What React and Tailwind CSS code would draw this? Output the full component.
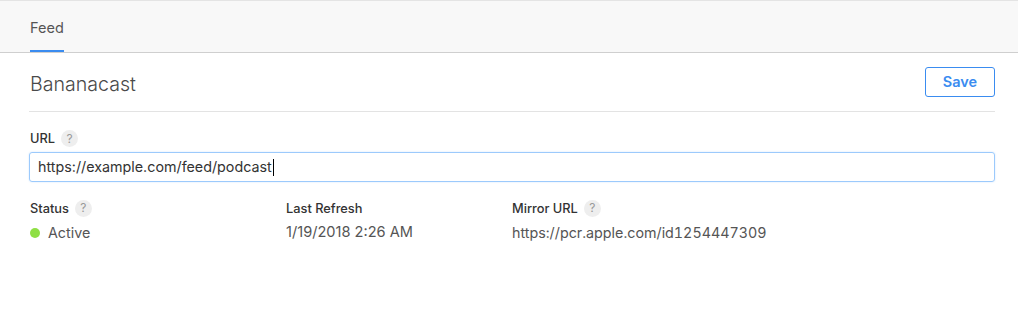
import React from "react";

function Help() {
  return (
    <span className="ml-[6px] inline-flex h-[17px] w-[17px] items-center justify-center rounded-full bg-[#eeeeee] text-[12px] font-normal leading-none text-[#999]">
      ?
    </span>
  );
}

export default function App() {
  return (
    <div className="h-[311px] w-[1018px] bg-white text-[#333] [font-family:Inter,'Liberation_Sans',sans-serif]">
      <div className="h-[53px] border-y border-t-[#e4e4e4] border-b-[#cfcfcf] bg-[#f8f8f8] px-[30px]">
        <div className="flex h-full items-end">
          <div className="flex h-full flex-col justify-end">
            <span className="pb-[15px] text-[14.5px] leading-none text-[#555]">Feed</span>
            <div className="h-[2px] w-[34px] bg-[#3a8cf0]" />
          </div>
        </div>
      </div>
      <div className="pl-[29px] pr-[23px]">
        <div className="flex h-[59px] items-center justify-between border-b border-[#e3e3e3] pl-[1px]">
          <h1 className="mt-[5px] text-[19.6px] font-light leading-none text-[#4a4a4a]">Bananacast</h1>
          <button className="h-[30px] w-[70px] rounded-[3px] border border-[#3a8cf0] text-[14.5px] font-semibold text-[#3a8cf0]">
            Save
          </button>
        </div>
        <div className="pt-[17px]">
          <div className="flex items-center pl-[1px] text-[12.8px] font-medium text-[#333]">
            URL <Help />
          </div>
          <div className="mt-[4px] flex h-[30px] items-center rounded-[3px] border border-[#9ccafc] px-[8px] text-[14.3px] text-[#333] shadow-[0_0_2px_#cfe4ff]">
            https://example.com/feed/podcast<span className="ml-[1px] h-[17px] w-[1px] bg-black" />
          </div>
        </div>
        <div className="mt-[17px] flex pl-[1px]">
          <div className="w-[256px]">
            <div className="flex h-[18px] items-center text-[12.8px] font-medium text-[#333]">
              Status <Help />
            </div>
            <div className="mt-[5px] flex items-center text-[14.3px] text-[#555]">
              <span className="mr-[8px] h-[10px] w-[10px] rounded-full bg-[#8fdf45]" />
              Active
            </div>
          </div>
          <div className="w-[226px]">
            <div className="flex h-[18px] items-center text-[12.8px] font-medium text-[#333]">Last Refresh</div>
            <div className="mt-[5px] text-[14.6px] text-[#555]">1/19/2018 2:26 AM</div>
          </div>
          <div>
            <div className="flex h-[18px] items-center text-[12.8px] font-medium text-[#333]">
              Mirror URL <Help />
            </div>
            <div className="mt-[5px] text-[14.3px] tabular-nums text-[#555]">https://pcr.apple.com/id1254447309</div>
          </div>
        </div>
      </div>
    </div>
  );
}
